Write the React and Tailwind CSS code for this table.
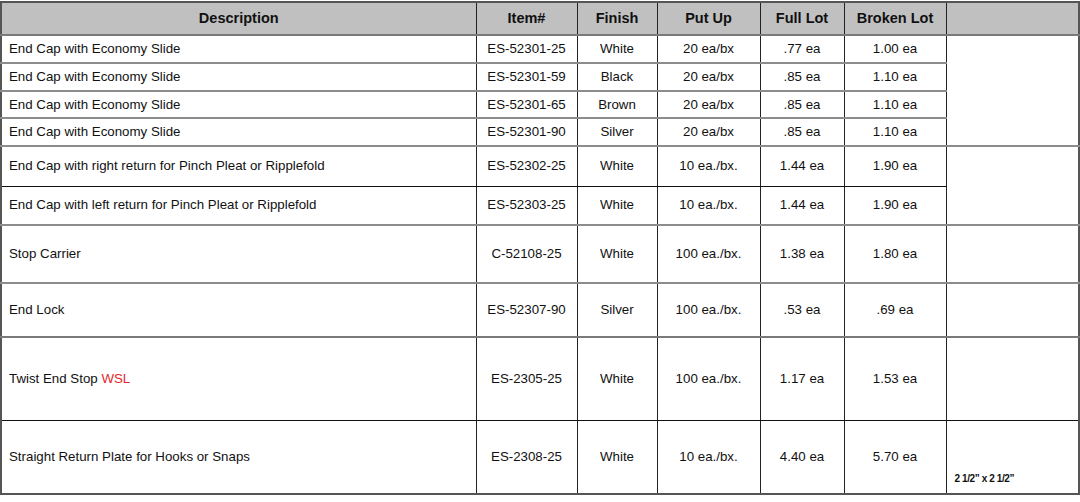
import React from "react";

const rows = [
  { d: "End Cap with Economy Slide", i: "ES-52301-25", f: "White", p: "20 ea/bx", fl: ".77 ea", bl: "1.00 ea", h: "h-[28px]", b: "border-b-2 border-b-[#8c8c8c]", last: { span: 4 } },
  { d: "End Cap with Economy Slide", i: "ES-52301-59", f: "Black", p: "20 ea/bx", fl: ".85 ea", bl: "1.10 ea", h: "h-[28px]", b: "border-b-2 border-b-[#8c8c8c]" },
  { d: "End Cap with Economy Slide", i: "ES-52301-65", f: "Brown", p: "20 ea/bx", fl: ".85 ea", bl: "1.10 ea", h: "h-[27px]", b: "border-b-2 border-b-[#8c8c8c]" },
  { d: "End Cap with Economy Slide", i: "ES-52301-90", f: "Silver", p: "20 ea/bx", fl: ".85 ea", bl: "1.10 ea", h: "h-[28px]", b: "border-b-2 border-b-[#8c8c8c]" },
  { d: "End Cap with right return for Pinch Pleat or Ripplefold", i: "ES-52302-25", f: "White", p: "10 ea./bx.", fl: "1.44 ea", bl: "1.90 ea", h: "h-[40px]", b: "border-b border-b-[#111]", last: { span: 2 } },
  { d: "End Cap with left return for Pinch Pleat or Ripplefold", i: "ES-52303-25", f: "White", p: "10 ea./bx.", fl: "1.44 ea", bl: "1.90 ea", h: "h-[39px]", b: "border-b-2 border-b-[#8c8c8c]" },
  { d: "Stop Carrier", i: "C-52108-25", f: "White", p: "100 ea./bx.", fl: "1.38 ea", bl: "1.80 ea", h: "h-[58px]", b: "border-b-2 border-b-[#8c8c8c]", last: { span: 1 } },
  { d: "End Lock", i: "ES-52307-90", f: "Silver", p: "100 ea./bx.", fl: ".53 ea", bl: ".69 ea", h: "h-[54px]", b: "border-b-2 border-b-[#7a7a7a]", last: { span: 1 } },
  { d: "Twist End Stop", red: "WSL", i: "ES-2305-25", f: "White", p: "100 ea./bx.", fl: "1.17 ea", bl: "1.53 ea", h: "h-[83px]", b: "border-b border-b-[#111]", last: { span: 1 } },
  { d: "Straight Return Plate for Hooks or Snaps", i: "ES-2308-25", f: "White", p: "10 ea./bx.", fl: "4.40 ea", bl: "5.70 ea", h: "h-[74px]", b: "border-b-2 border-b-[#555]", last: { span: 1, note: "2 1/2\u201d x 2 1/2\u201d" } },
];

const vline = "border-r border-r-[#222]";

export default function App() {
  return (
    <div className="bg-white w-[1080px] h-[502px] pt-px" style={{ fontFamily: '"Liberation Sans", Arial, sans-serif' }}>
      <table className="table-fixed border-collapse w-[1078px] border-2 border-[#555] text-[13.3px] text-[#111]">
        <colgroup>
          <col className="w-[475px]" />
          <col className="w-[101px]" />
          <col className="w-[80px]" />
          <col className="w-[103px]" />
          <col className="w-[84px]" />
          <col className="w-[102px]" />
          <col className="w-[133px]" />
        </colgroup>
        <thead>
          <tr className="h-[33px] bg-[#c0c0c0] text-[14.5px] font-bold">
            <th className={`${vline} border-b-2 border-b-[#7a7a7a] text-center`}>Description</th>
            <th className={`${vline} border-b-2 border-b-[#7a7a7a] text-center`}>Item#</th>
            <th className={`${vline} border-b-2 border-b-[#7a7a7a] text-center`}>Finish</th>
            <th className={`${vline} border-b-2 border-b-[#7a7a7a] text-center`}>Put Up</th>
            <th className={`${vline} border-b-2 border-b-[#7a7a7a] text-center`}>Full Lot</th>
            <th className={`${vline} border-b-2 border-b-[#7a7a7a] text-center`}>Broken Lot</th>
            <th className="border-b-2 border-b-[#7a7a7a]"></th>
          </tr>
        </thead>
        <tbody>
          {rows.map((r, idx) => {
            const lastB = idx === 3 || idx === 5 ? "border-b-2 border-b-[#8c8c8c]" : r.b;
            return (
              <tr key={idx} className={r.h}>
                <td className={`${vline} ${r.b} pl-[7px] align-middle`}>
                  {r.d}
                  {r.red && <span className="text-[#e3262b]"> {r.red}</span>}
                </td>
                <td className={`${vline} ${r.b} text-center align-middle`}>{r.i}</td>
                <td className={`${vline} ${r.b} text-center align-middle`}>{r.f}</td>
                <td className={`${vline} ${r.b} text-center align-middle`}>{r.p}</td>
                <td className={`${vline} ${r.b} text-center align-middle`}>{r.fl}</td>
                <td className={`${vline} ${r.b} text-center align-middle`}>{r.bl}</td>
                {r.last && (
                  <td
                    rowSpan={r.last.span}
                    className={`${idx === 0 || idx === 4 ? "border-b-2 border-b-[#8c8c8c]" : lastB} align-bottom pl-[8px] pb-[5px]`}
                  >
                    {r.last.note && (
                      <span className="text-[10px] font-bold tracking-[-0.4px] leading-none">{r.last.note}</span>
                    )}
                  </td>
                )}
              </tr>
            );
          })}
        </tbody>
      </table>
    </div>
  );
}
